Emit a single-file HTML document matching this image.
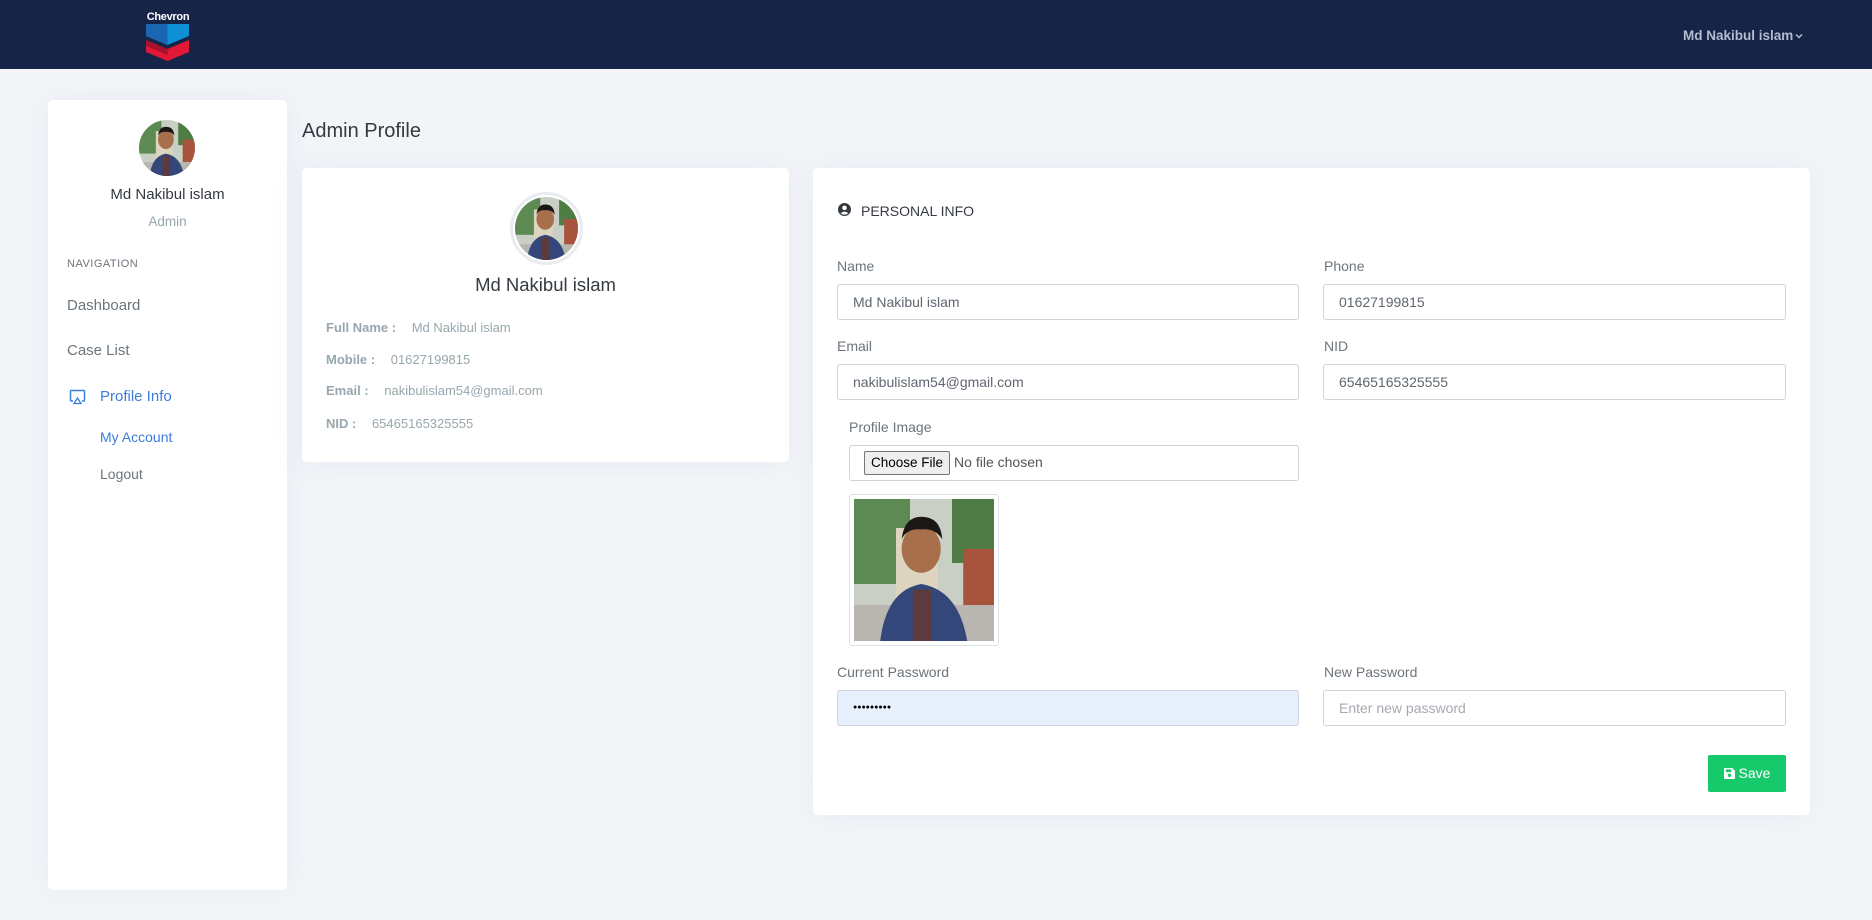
<!DOCTYPE html>
<html><head><meta charset="utf-8">
<style>
*{box-sizing:border-box;margin:0;padding:0}
body{width:1872px;height:920px;background:#f3f5f9;font-family:"Liberation Sans",sans-serif;position:relative;overflow:hidden;color:#343a40}
.hdr{position:absolute;left:0;top:0;width:1872px;height:69px;background:#162447}
.abs{position:absolute}
.card{position:absolute;background:#fff;border-radius:5px;box-shadow:0 0 30px rgba(150,160,190,.12)}
.lbl{position:absolute;font-size:14px;color:#6c757d}
.inp{position:absolute;height:36px;border:1px solid #ced4da;border-radius:3px;background:#fff;font-size:14px;color:#5f6670;padding-left:15px;line-height:34px}
.row{position:absolute;left:24px;font-size:13px;color:#98a6ad}
.row b{color:#98a6ad;font-weight:bold;margin-right:12px}
.nav{position:absolute;left:67px;font-size:15px;color:#6c757d}
</style></head><body>
<svg width="0" height="0" style="position:absolute">
<defs>
<symbol id="ph" viewBox="0 0 100 120" preserveAspectRatio="xMidYMid slice">
<rect width="100" height="120" fill="#c9cfc4"/>
<rect x="0" y="0" width="40" height="70" fill="#5d8a52"/>
<rect x="30" y="30" width="30" height="50" fill="#ddd5c0"/>
<rect x="70" y="0" width="30" height="55" fill="#4f7c45"/>
<rect x="78" y="45" width="22" height="60" fill="#a8543d"/>
<rect x="0" y="85" width="100" height="35" fill="#b9b6b1"/>
<ellipse cx="48" cy="45" rx="14" ry="17" fill="#a86f4c"/>
<path d="M34 38 Q36 22 48 22 Q62 22 63 38 Q58 30 48 31 Q38 30 34 38Z" fill="#1b1715"/>
<path d="M18 120 Q20 75 48 70 Q78 75 82 120Z" fill="#34477a"/>
<rect x="42" y="74" width="13" height="46" fill="#5b3b3e"/>
</symbol>
</defs>
</svg>

<div class="hdr"></div>
<div class="abs" style="left:146px;top:11px;width:44px;font-size:11px;font-weight:bold;color:#fff;text-align:center;letter-spacing:-0.3px">Chevron</div>
<svg class="abs" style="left:146px;top:24px" width="43" height="37" viewBox="0 0 43 37">
<path d="M0 0 H43 V12 L21.5 21 L0 12Z" fill="#0f8fd6"/>
<path d="M0 0 H21.5 V21 L0 12Z" fill="#1b66b0"/>
<path d="M0 16 L21.5 25 L43 16 V28 L21.5 37 L0 28Z" fill="#e21836"/>
<path d="M0 16 L21.5 25 V31 L0 22Z" fill="#a6112c"/>
</svg>
<div class="abs" style="left:1683px;top:28px;font-size:13.5px;font-weight:bold;color:#b4bdd0">Md Nakibul islam</div>
<svg class="abs" style="left:1795px;top:33px" width="8" height="6" viewBox="0 0 8 6"><path d="M1 1.5 L4 4.5 L7 1.5" stroke="#b4bdd0" stroke-width="1.5" fill="none"/></svg>

<!-- sidebar -->
<div class="card" style="left:48px;top:100px;width:239px;height:790px"></div>
<svg class="abs" style="left:139px;top:120px" width="56" height="56"><defs><clipPath id="c1"><circle cx="28" cy="28" r="28"/></clipPath></defs><g clip-path="url(#c1)"><use href="#ph" width="56" height="56"/></g></svg>
<div class="abs" style="left:48px;top:186px;width:239px;text-align:center;font-size:15px;color:#343a40">Md Nakibul islam</div>
<div class="abs" style="left:48px;top:214px;width:239px;text-align:center;font-size:13.5px;color:#98a6ad">Admin</div>
<div class="abs" style="left:67px;top:258px;font-size:11px;color:#6c757d;letter-spacing:.5px">NAVIGATION</div>
<div class="nav" style="top:297px">Dashboard</div>
<div class="nav" style="top:342px">Case List</div>
<svg class="abs" style="left:69px;top:389px" width="17" height="16" viewBox="0 0 17 16"><path d="M4 12 H2.5 Q1.5 12 1.5 11 V2.5 Q1.5 1.5 2.5 1.5 H14.5 Q15.5 1.5 15.5 2.5 V11 Q15.5 12 14.5 12 H13" stroke="#3b7ddd" stroke-width="1.5" fill="none"/><path d="M8.5 9 L12 14.5 H5Z" stroke="#3b7ddd" stroke-width="1.3" fill="none"/></svg>
<div class="nav" style="top:388px;left:100px;color:#3b7ddd">Profile Info</div>
<div class="nav" style="top:429px;left:100px;color:#3b7ddd;font-size:14px">My Account</div>
<div class="nav" style="top:466px;left:100px;font-size:14px">Logout</div>

<div class="abs" style="left:302px;top:120px;font-size:20px;color:#343a40">Admin Profile</div>

<!-- card 1 -->
<div class="card" style="left:302px;top:168px;width:487px;height:294px">
<div class="abs" style="left:208px;top:24px;width:73px;height:73px;border-radius:50%;border:3px solid #e9ecef;background:#fff"></div>
<svg class="abs" style="left:213px;top:29px" width="63" height="63"><defs><clipPath id="c2"><circle cx="31.5" cy="31.5" r="31.5"/></clipPath></defs><g clip-path="url(#c2)"><use href="#ph" width="63" height="63"/></g></svg>
<div class="abs" style="left:0;top:106px;width:487px;text-align:center;font-size:18.5px;color:#343a40">Md Nakibul islam</div>
<div class="row" style="top:152px"><b>Full Name :</b> Md Nakibul islam</div>
<div class="row" style="top:184px"><b>Mobile :</b> 01627199815</div>
<div class="row" style="top:215px"><b>Email :</b> nakibulislam54@gmail.com</div>
<div class="row" style="top:248px"><b>NID :</b> 65465165325555</div>
</div>

<!-- card 2 -->
<div class="card" style="left:813px;top:168px;width:997px;height:647px"></div>
<svg class="abs" style="left:838px;top:203px" width="13" height="13" viewBox="0 0 16 16"><circle cx="8" cy="8" r="8" fill="#343a40"/><circle cx="8" cy="6" r="2.8" fill="#fff"/><path d="M3.2 12.6 Q8 8.5 12.8 12.6 Q8 16 3.2 12.6Z" fill="#fff"/></svg>
<div class="abs" style="left:861px;top:203px;font-size:14px;color:#343a40">PERSONAL INFO</div>

<div class="lbl" style="left:837px;top:258px">Name</div>
<div class="lbl" style="left:1324px;top:258px">Phone</div>
<div class="inp" style="left:837px;top:284px;width:462px">Md Nakibul islam</div>
<div class="inp" style="left:1323px;top:284px;width:463px">01627199815</div>
<div class="lbl" style="left:837px;top:338px">Email</div>
<div class="lbl" style="left:1324px;top:338px">NID</div>
<div class="inp" style="left:837px;top:364px;width:462px">nakibulislam54@gmail.com</div>
<div class="inp" style="left:1323px;top:364px;width:463px">65465165325555</div>
<div class="lbl" style="left:849px;top:419px">Profile Image</div>
<div class="inp" style="left:849px;top:445px;width:450px;padding-left:14px;color:#444">
<span style="display:inline-block;border:1px solid #767676;background:#efefef;border-radius:2px;font-size:13.5px;color:#000;line-height:22px;padding:0 6px;vertical-align:middle;margin-top:-3px">Choose File</span><span style="font-size:14px;color:#555;margin-left:4px;vertical-align:middle;position:relative;top:-2px">No file chosen</span></div>
<div class="abs" style="left:849px;top:494px;width:150px;height:152px;border:1px solid #dee2e6;border-radius:3px;background:#fff"></div>
<svg class="abs" style="left:854px;top:499px" width="140" height="142"><use href="#ph" width="140" height="142"/></svg>

<div class="lbl" style="left:837px;top:664px">Current Password</div>
<div class="lbl" style="left:1324px;top:664px">New Password</div>
<div class="inp" style="left:837px;top:690px;width:462px;background:#e8f0fe;color:#000;font-size:7px;letter-spacing:0">●●●●●●●●●</div>
<div class="inp" style="left:1323px;top:690px;width:463px;color:#a5aab0">Enter new password</div>

<div class="abs" style="left:1708px;top:755px;width:78px;height:37px;background:#16c96b;border-radius:2px;color:#fff;font-size:14px;line-height:37px;text-align:center">
<svg width="11" height="11" viewBox="0 0 12 12" style="vertical-align:-1px;margin-right:4px"><path d="M0 1 Q0 0 1 0 H9 L12 3 V11 Q12 12 11 12 H1 Q0 12 0 11Z" fill="#fff"/><rect x="2" y="1.5" width="6" height="3" fill="#16c96b"/><circle cx="6" cy="8" r="1.8" fill="#16c96b"/></svg>Save</div>
</body></html>
